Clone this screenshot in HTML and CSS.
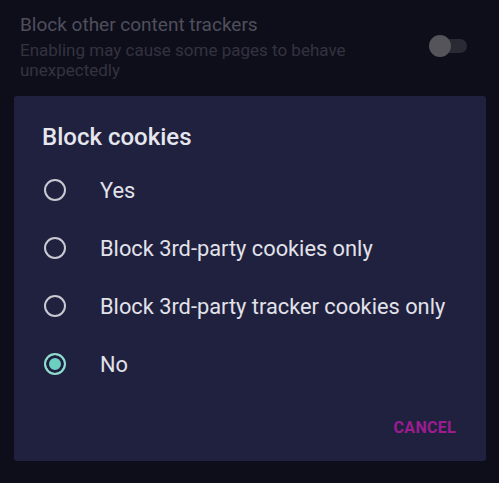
FILE: index.html
```html
<!DOCTYPE html>
<html>
<head>
<meta charset="utf-8">
<link rel="stylesheet" href="styles.css">
</head>
<body>
<div class="setting">
  <div class="setting-text">
    <div class="setting-title">Block other content trackers</div>
    <div class="setting-sub">Enabling may cause some pages to behave unexpectedly</div>
  </div>
  <div class="toggle"><span class="thumb"></span></div>
</div>
<div class="dialog">
  <div class="dialog-title">Block cookies</div>
  <div class="options">
    <div class="option"><span class="radio"></span><span class="label">Yes</span></div>
    <div class="option"><span class="radio"></span><span class="label">Block 3rd-party cookies only</span></div>
    <div class="option"><span class="radio"></span><span class="label">Block 3rd-party tracker cookies only</span></div>
    <div class="option"><span class="radio checked"></span><span class="label">No</span></div>
  </div>
  <div class="actions"><span class="cancel">CANCEL</span></div>
</div>
</body>
</html>
```
FILE: styles.css
```css
html, body {
  margin: 0;
  padding: 0;
  background: #0e0e1b;
  width: 499px;
  height: 483px;
  overflow: hidden;
  font-family: Roboto, "Noto Sans", sans-serif;
}
.setting {
  display: flex;
  align-items: flex-start;
  padding: 13px 0 0 20px;
  height: 84px;
  box-sizing: border-box;
}
.setting-text {
  width: 380px;
}
.setting-title {
  font-size: 19px;
  color: #4f4f5c;
  line-height: 24px;
}
.setting-sub {
  margin-top: 3px;
  font-size: 17px;
  color: #33333f;
  line-height: 20px;
}
.toggle {
  margin-left: 31px;
  margin-top: 26px;
  width: 36px;
  height: 14px;
  border-radius: 7px;
  background: #2a2a34;
  position: relative;
}
.thumb {
  position: absolute;
  left: -2px;
  top: -4px;
  width: 22px;
  height: 22px;
  border-radius: 50%;
  background: #54545a;
}
.dialog {
  margin: 12px 13px 0 14px;
  height: 365px;
  background: #20213f;
  border-radius: 3px;
  box-sizing: border-box;
  padding: 27px 0 0 0;
  display: flex;
  flex-direction: column;
}
.dialog-title {
  padding-left: 28px;
  font-size: 24px;
  font-weight: 500;
  color: #e6e6ee;
  line-height: 28px;
}
.options {
  margin-top: 10px;
  display: flex;
  flex-direction: column;
}
.option {
  display: flex;
  align-items: center;
  height: 58px;
  padding-left: 30px;
}
.radio {
  width: 18px;
  height: 18px;
  border: 2.5px solid #c9c9d3;
  border-radius: 50%;
  box-sizing: content-box;
  flex: none;
}
.radio.checked {
  border-color: #8fdcd0;
  background: #6ccfc0;
  box-shadow: inset 0 0 0 3px #20213f;
}
.label {
  margin-left: 34px;
  font-size: 21.8px;
  color: #e2e2ea;
}
.actions {
  display: flex;
  justify-content: flex-end;
  padding: 25px 30px 0 0;
}
.cancel {
  font-size: 16px;
  font-weight: 700;
  color: #9d1c8f;
  letter-spacing: 0.3px;
}
```
